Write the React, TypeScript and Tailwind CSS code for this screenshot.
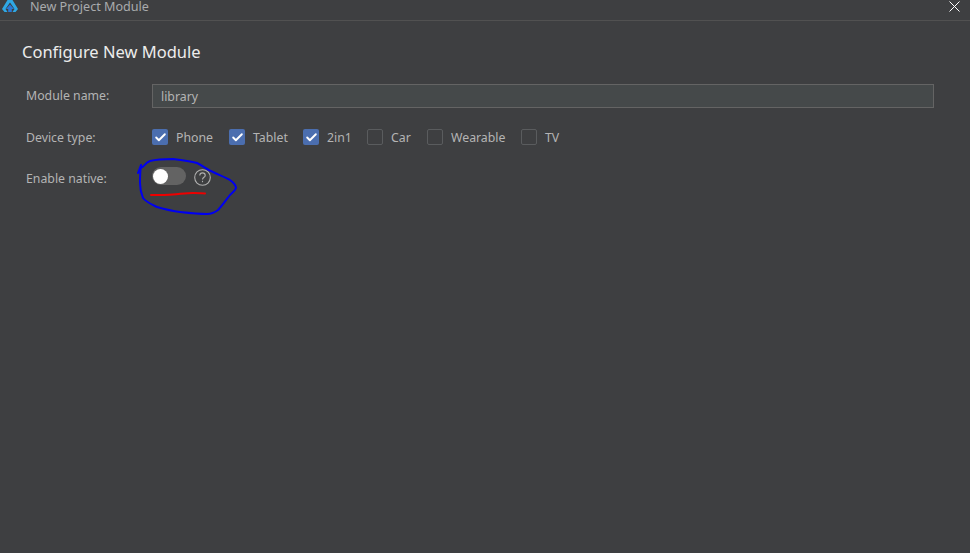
import React from 'react';
import { Check } from 'lucide-react';

const devices = [
  { name: 'Phone', checked: true, width: 'w-[77px]' },
  { name: 'Tablet', checked: true, width: 'w-[74px]' },
  { name: '2in1', checked: true, width: 'w-[64px]' },
  { name: 'Car', checked: false, width: 'w-[60px]' },
  { name: 'Wearable', checked: false, width: 'w-[94px]' },
  { name: 'TV', checked: false, width: 'w-[50px]' },
];

function DeviceCheckbox({ name, checked, width }: { name: string; checked: boolean; width: string }) {
  return (
    <label className={`flex items-center gap-[8px] ${width}`}>
      {checked ? (
        <span className="flex h-[16px] w-[16px] items-center justify-center rounded-[2px] bg-[#4b6eaf]">
          <Check className="h-[13px] w-[13px] text-white" strokeWidth={3.5} />
        </span>
      ) : (
        <span className="h-[16px] w-[16px] rounded-[2px] border border-[#5a5c5e]" />
      )}
      <span className="translate-y-[1px]">{name}</span>
    </label>
  );
}

export default function App() {
  return (
    <div className="relative h-[553px] w-[970px] overflow-hidden bg-[#3e3f41] font-['Noto_Sans',sans-serif] text-[12.3px] text-[#b4b4b4]">
      {/* Title bar */}
      <div className="flex h-[21px] items-start justify-between border-b border-[#515151]">
        <div className="flex items-start gap-[12px] pl-[2px]">
          <svg width="16" height="12" viewBox="0 0 16 12">
            <path d="M5.5 0 H10.5 L16 9 L13.5 12 H10.5 L12.5 9 L8 2.5 L3.5 9 L5.5 12 H2.5 L0 9 Z" fill="#2fa8e4" />
            <path d="M8 4.5 L12 9 H9.8 V12 H6.2 V9 H4 Z" fill="#2a78d4" />
          </svg>
          <span className="text-[12.6px] leading-[13px] text-[#a9abad]">New Project Module</span>
        </div>
        <svg className="mr-[10px] mt-[1px]" width="11" height="11" viewBox="0 0 11 11" stroke="#ffffff" strokeWidth="1">
          <path d="M0.5 0.5 L10.5 10.5 M10.5 0.5 L0.5 10.5" />
        </svg>
      </div>

      {/* Form */}
      <div className="px-[22px] pt-[19px]">
        <h1 className="text-[16.5px] leading-[24px] text-[#ececec]">Configure New Module</h1>

        <div className="mt-[20px] pl-[4px] pr-[14px]">
          <div className="flex h-[24px] items-center">
            <span className="w-[126px]">Module name:</span>
            <input
              readOnly
              value="library"
              className="h-[24px] flex-1 border border-[#646464] bg-[#45494a] px-[8px] text-[#b4b4b4] outline-none"
            />
          </div>

          <div className="mt-[17px] flex h-[24px] items-center">
            <span className="w-[126px] translate-y-[1px]">Device type:</span>
            {devices.map((device) => (
              <DeviceCheckbox key={device.name} {...device} />
            ))}
          </div>

          <div className="mt-[15px] flex h-[24px] items-center">
            <span className="w-[126px] translate-y-[3px]">Enable native:</span>
            <div className="flex items-center gap-[8px]">
              <span className="flex h-[18px] w-[34px] items-center rounded-full bg-[#636363] pl-[1px]">
                <span className="h-[15px] w-[15px] rounded-full bg-white" />
              </span>
              <svg className="translate-y-[1px]" width="17" height="17" viewBox="0 0 17 17" fill="none" stroke="#b0b0b0" strokeWidth="1.1">
                <circle cx="8.5" cy="8.5" r="7.8" />
                <path d="M5.8 6.4 C5.8 3 11.2 3 11.2 6.4 C11.2 8.4 8.5 8.2 8.5 10.6" />
                <path d="M8.5 11.8 V13.2" />
              </svg>
            </div>
          </div>
        </div>
      </div>

      {/* Hand drawn annotation on top of the screenshot */}
      <svg className="pointer-events-none absolute left-0 top-0" width="970" height="553" fill="none" strokeLinecap="round" strokeLinejoin="round">
        <path
          d="M138 173 L141 165 C141 172 144 163 150 161 C158 159 165 159 173 159 C182 160 190 161 197 163 C203 166 208 170 213 172 C219 175 225 177 230 180 C234 183 236 185 236 188 C235 191 232 193 230 195 C226 200 222 206 218 210 C214 213 211 214 207 214 C198 214 189 213 180 212 C172 211 164 209 157 207 C151 204 146 202 143 198 C141 193 140 188 140 183 C140 178 140 172 141 165"
          stroke="#0000f0"
          strokeWidth="2"
        />
        <path d="M151 195 C160 195 166 195 173 194.5 C180 194 187 193 193 193 C197 193 201 193 205 193.5" stroke="#ee0000" strokeWidth="2" />
      </svg>
    </div>
  );
}
